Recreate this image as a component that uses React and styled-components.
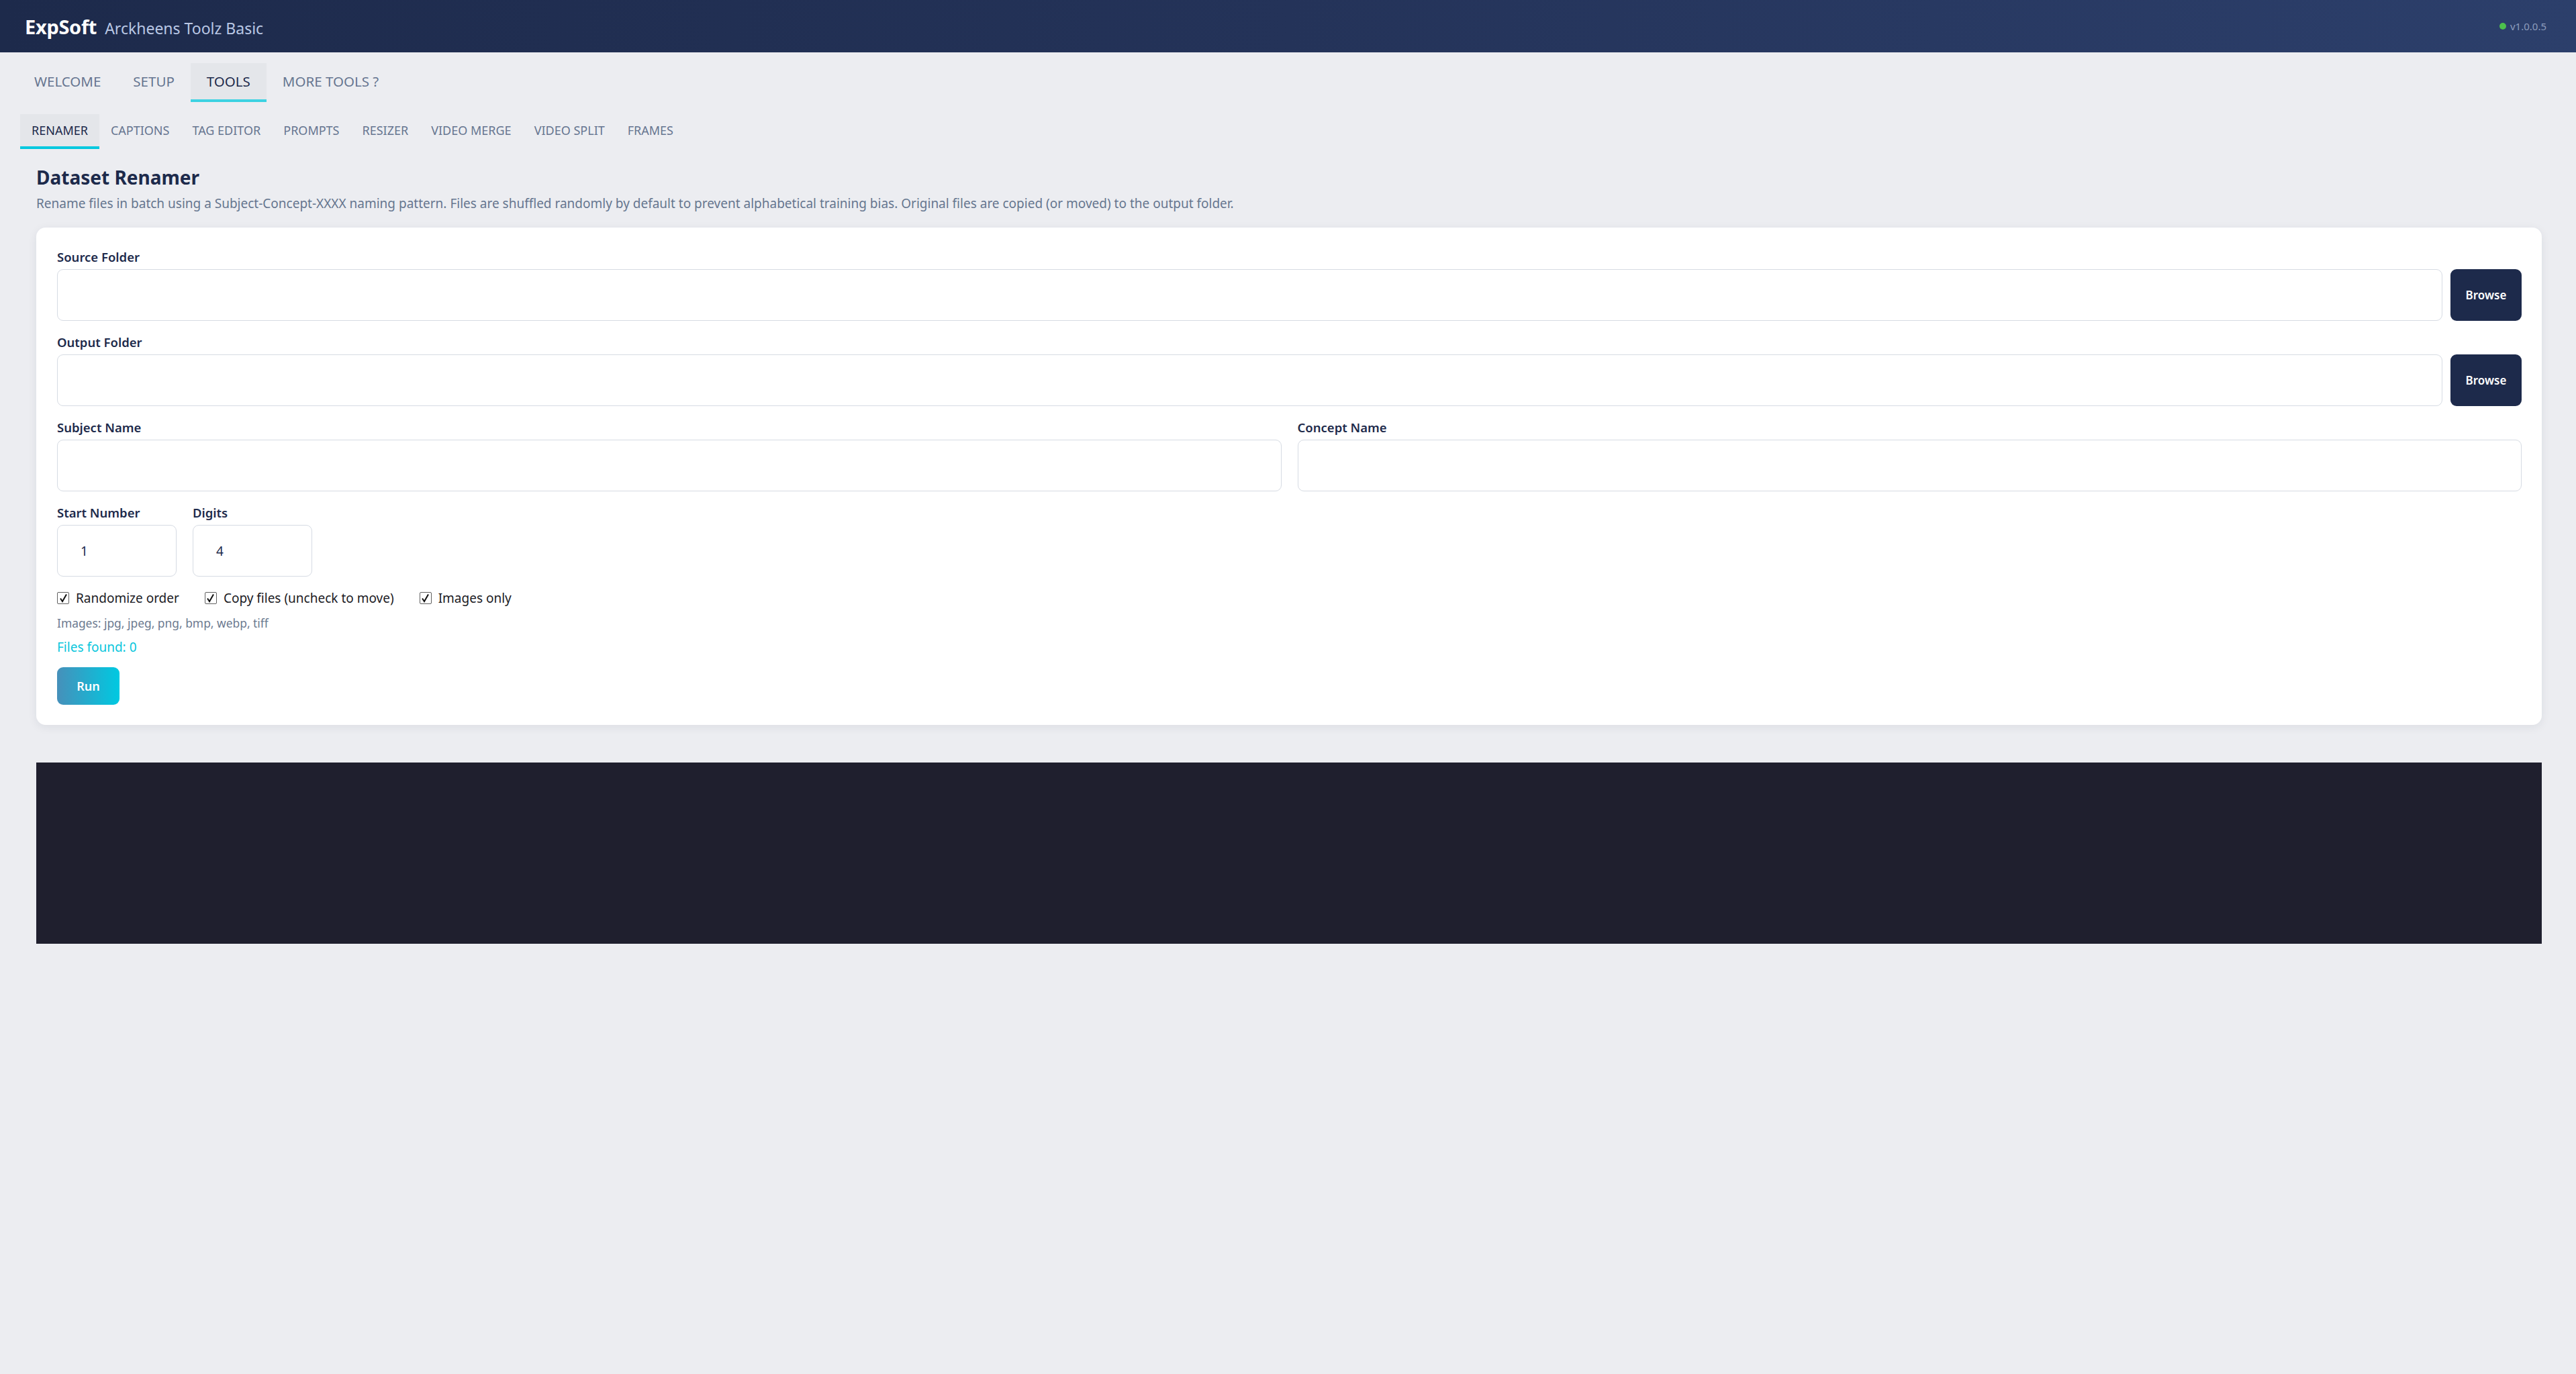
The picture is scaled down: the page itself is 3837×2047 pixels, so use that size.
import React from 'react'
import styled, { createGlobalStyle } from 'styled-components'

const GlobalStyle = createGlobalStyle`
  html, body {
    margin: 0;
    padding: 0;
    background: #ecedf1;
    font-family: "Noto Sans", "Open Sans", sans-serif;
  }
  * { box-sizing: border-box; }
`

const Page = styled.div`
  min-height: 100vh;
  background: #ecedf1;
`

const Header = styled.header`
  height: 78px;
  display: flex;
  align-items: center;
  justify-content: space-between;
  padding: 0 44px 0 37px;
  background: linear-gradient(90deg, #1d2a4b 0%, #243359 50%, #2c3f6b 100%);
`

const Brand = styled.div`
  display: flex;
  align-items: baseline;
  gap: 12px;
`

const Logo = styled.span`
  color: #ffffff;
  font-size: 29px;
  font-weight: 700;
  letter-spacing: -0.3px;
`

const AppName = styled.span`
  color: #b9c7e4;
  font-size: 23px;
`

const Version = styled.div`
  display: flex;
  align-items: center;
  gap: 6px;
  color: #8d9dbd;
  font-size: 15px;
`

const Dot = styled.span`
  width: 10px;
  height: 10px;
  border-radius: 50%;
  background: #4cc04c;
`

const TabBar = styled.nav`
  display: flex;
  padding: ${p => p.$sub ? '18px 0 0 30px' : '16px 0 0 27px'};
`

const Tab = styled.div`
  padding: ${p => p.$sub ? '12px 17px' : '14px 24px'};
  font-size: ${p => p.$sub ? '18px' : '20.5px'};
  line-height: ${p => p.$sub ? '24px' : '26px'};
  color: ${p => p.$active ? '#1d2a4b' : '#667590'};
  background: ${p => p.$active ? '#e4e6ea' : 'transparent'};
  border-bottom: 4px solid ${p => p.$active ? (p.$sub ? '#00c8df' : '#3dd2e2') : 'transparent'};
  cursor: pointer;
`

const Content = styled.main`
  padding: 24px 51px 0 54px;
`

const Title = styled.h1`
  margin: 0;
  font-size: 28px;
  line-height: 36px;
  font-weight: 700;
  color: #1d2a4b;
`

const Description = styled.p`
  margin: 8px 0 0;
  font-size: 19px;
  line-height: 26px;
  color: #66768f;
`

const Card = styled.section`
  margin-top: 23px;
  background: #ffffff;
  border-radius: 14px;
  box-shadow: 0 3px 14px rgba(30, 40, 70, 0.08);
  padding: 32px 30px 30px 31px;
  display: flex;
  flex-direction: column;
`

const Field = styled.div`
  display: flex;
  flex-direction: column;
  margin-bottom: 20px;
  width: ${p => p.$width || 'auto'};
`

const Label = styled.label`
  font-size: 18.5px;
  line-height: 24px;
  font-weight: 600;
  color: #1d2a4b;
  margin-bottom: 6px;
`

const InputRow = styled.div`
  display: flex;
  gap: 12px;
`

const TextInput = styled.input`
  flex: 1 1 auto;
  min-width: 0;
  width: 100%;
  height: 77px;
  border: 1px solid #d6dbe3;
  border-radius: 9px;
  padding: 0 0 0 34px;
  font-family: inherit;
  font-size: 19px;
  color: #1d2a4b;
  background: #fff;
  outline: none;
`

const BrowseButton = styled.button`
  flex: none;
  width: 106px;
  height: 77px;
  border: none;
  border-radius: 9px;
  background: #1d2a4b;
  color: #ffffff;
  font-family: inherit;
  font-size: 17px;
  font-weight: 600;
  cursor: pointer;
`

const TwoCols = styled.div`
  display: grid;
  grid-template-columns: 1fr 1fr;
  gap: 24px;
`

const SmallRow = styled.div`
  display: flex;
  gap: 24px;
`

const CheckRow = styled.div`
  display: flex;
  align-items: center;
  gap: 38px;
  height: 24px;
`

const CheckItem = styled.label`
  display: flex;
  align-items: center;
  gap: 10px;
  font-size: 19px;
  color: #1b1b24;
`

const Box = styled.span`
  width: 18px;
  height: 18px;
  border: 1.5px solid #606060;
  border-radius: 2px;
  background: #fff;
  display: flex;
  align-items: center;
  justify-content: center;
`

const Hint = styled.div`
  margin-top: 15px;
  font-size: 17.4px;
  line-height: 20px;
  color: #6c7a90;
`

const Found = styled.div`
  margin-top: 15px;
  font-size: 19px;
  line-height: 22px;
  color: #08c6dc;
`

const RunButton = styled.button`
  margin-top: 19px;
  align-self: flex-start;
  width: 93px;
  height: 56px;
  border: none;
  border-radius: 9px;
  background: linear-gradient(90deg, #4690ba 0%, #00c9e1 100%);
  color: #fff;
  font-family: inherit;
  font-size: 18px;
  font-weight: 600;
  cursor: pointer;
`

const Console = styled.div`
  margin-top: 56px;
  height: 270px;
  background: #1f1f2e;
`

const Check = ({ children }) => (
  <CheckItem>
    <Box>
      <svg width="13" height="14" viewBox="0 0 13 14">
        <path d="M2 7.5 L5 12 L11 1.5" fill="none" stroke="#111" strokeWidth="2" />
      </svg>
    </Box>
    {children}
  </CheckItem>
)

const mainTabs = ['WELCOME', 'SETUP', 'TOOLS', 'MORE TOOLS ?']
const subTabs = ['RENAMER', 'CAPTIONS', 'TAG EDITOR', 'PROMPTS', 'RESIZER', 'VIDEO MERGE', 'VIDEO SPLIT', 'FRAMES']

const App = () => {
  return (
    <Page>
      <GlobalStyle />
      <Header>
        <Brand>
          <Logo>ExpSoft</Logo>
          <AppName>Arckheens Toolz Basic</AppName>
        </Brand>
        <Version>
          <Dot />
          v1.0.0.5
        </Version>
      </Header>

      <TabBar>
        {mainTabs.map(t => (
          <Tab key={t} $active={t === 'TOOLS'}>{t}</Tab>
        ))}
      </TabBar>
      <TabBar $sub>
        {subTabs.map(t => (
          <Tab key={t} $sub $active={t === 'RENAMER'}>{t}</Tab>
        ))}
      </TabBar>

      <Content>
        <Title>Dataset Renamer</Title>
        <Description>
          Rename files in batch using a Subject-Concept-XXXX naming pattern. Files are shuffled randomly by default to prevent alphabetical training bias. Original files are copied (or moved) to the output folder.
        </Description>

        <Card>
          <Field>
            <Label>Source Folder</Label>
            <InputRow>
              <TextInput />
              <BrowseButton>Browse</BrowseButton>
            </InputRow>
          </Field>
          <Field>
            <Label>Output Folder</Label>
            <InputRow>
              <TextInput />
              <BrowseButton>Browse</BrowseButton>
            </InputRow>
          </Field>
          <TwoCols>
            <Field>
              <Label>Subject Name</Label>
              <TextInput />
            </Field>
            <Field>
              <Label>Concept Name</Label>
              <TextInput />
            </Field>
          </TwoCols>
          <SmallRow>
            <Field $width="178px">
              <Label>Start Number</Label>
              <TextInput defaultValue="1" />
            </Field>
            <Field $width="178px">
              <Label>Digits</Label>
              <TextInput defaultValue="4" />
            </Field>
          </SmallRow>
          <CheckRow>
            <Check>Randomize order</Check>
            <Check>Copy files (uncheck to move)</Check>
            <Check>Images only</Check>
          </CheckRow>
          <Hint>Images: jpg, jpeg, png, bmp, webp, tiff</Hint>
          <Found>Files found: 0</Found>
          <RunButton>Run</RunButton>
        </Card>

        <Console />
      </Content>
    </Page>
  )
}

export default App
